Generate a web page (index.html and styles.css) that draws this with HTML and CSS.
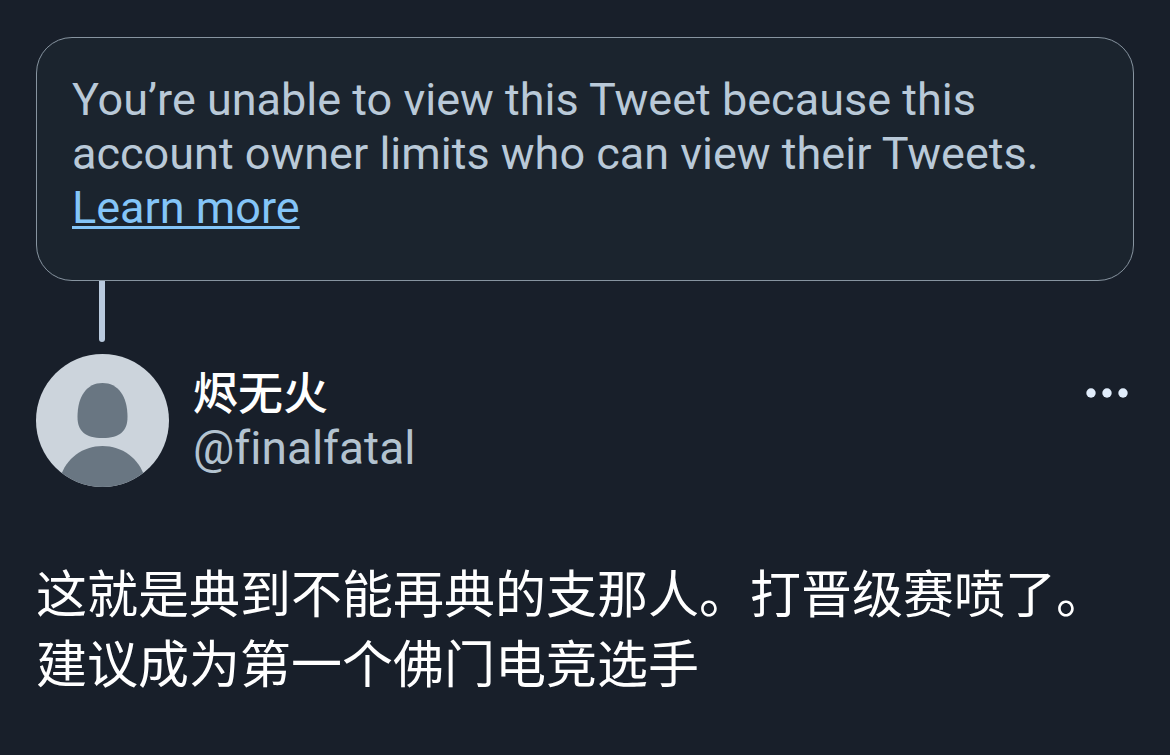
FILE: index.html
```
<!DOCTYPE html>
<html lang="zh-CN">
  <head>
    <meta charset="utf-8">
    <meta name="viewport" content="width=device-width, initial-scale=1">
    <link rel="stylesheet" href="styles.css">
    <title>烬无火 @finalfatal</title>
  </head>
  <body>
    <main class="thread">
      <!-- limited tweet -->
      <div class="notice" lang="en">
        You’re unable to view this Tweet because this account owner limits who can view their Tweets. <a class="notice_link" href="#">Learn more</a>
      </div>
      <div class="thread_line"></div>
      <article class="tweet">
        <header class="tweet_header">
          <svg class="avatar" viewBox="0 0 133 133" aria-hidden="true">
            <clipPath id="round"><circle cx="66.5" cy="66.5" r="66.5"/></clipPath>
            <g clip-path="url(#round)">
              <rect width="133" height="133" fill="#ccd4dc"/>
              <path fill="#697682" d="M66.5 29C82 29 91.5 42 91.5 63C91.5 77 84 84 66.5 84C49 84 41.5 77 41.5 63C41.5 42 51 29 66.5 29Z"/>
              <path fill="#697682" d="M24 124C30 104 47 92 66.5 92C86 92 103 104 109 124V133H24Z"/>
            </g>
          </svg>
          <div class="user">
            <div class="name">烬无火</div>
            <div class="handle">@finalfatal</div>
          </div>
          <button class="more" type="button" aria-label="More">
            <svg width="42" height="12" viewBox="0 0 42 12" fill="#e1edfb">
              <circle cx="5" cy="6" r="4.7"/>
              <circle cx="21" cy="6" r="4.7"/>
              <circle cx="37" cy="6" r="4.7"/>
            </svg>
          </button>
        </header>
        <p class="content">这就是典到不能再典的支那人。打晋级赛喷了。<br>建议成为第一个佛门电竞选手</p>
      </article>
    </main>
  </body>
</html>
```
FILE: styles.css
```
body{
  margin: 0;
  background: #181f2a;
  color: #fff;
  font-family: Roboto, "Noto Sans CJK SC", sans-serif;
}
.thread{
  padding: 37px 36px;
}
.notice{
  padding: 35px 35px 45px;
  border: 1px solid #8794a0;
  border-radius: 36px;
  background: #1b242e;
  color: #b9c9d8;
  font-size: 45px;
  line-height: 54px;
}
.notice_link{
  color: #84c5f8;
  text-decoration-thickness: 3px;
  text-decoration-skip-ink: none;
  text-underline-offset: 3px;
}
.thread_line{
  width: 6px;
  height: 61px;
  margin: 0 0 12px 63px;
  border-radius: 0 0 3px 3px;
  background: #b9cade;
}
.tweet_header{
  display: flex;
  align-items: flex-start;
}
.avatar{
  width: 133px;
  height: 133px;
}
.user{
  flex: 1;
  margin: 10px 0 0 24px;
  font-size: 45px;
  line-height: 54px;
}
.name{
  font-family: "Noto Sans CJK SC", sans-serif;
  font-weight: 500;
}
.handle{
  margin-top: 3px;
  color: #b3c3d0;
  font-size: 46px;
  font-variant-ligatures: none;
}
.more{
  display: flex;
  margin: 33px 6px 0 0;
  padding: 0;
  border: 0;
  background: none;
}
.content{
  margin: 69px 0 0;
  font-family: "Noto Sans CJK SC", sans-serif;
  font-size: 51px;
  line-height: 70px;
}
```
